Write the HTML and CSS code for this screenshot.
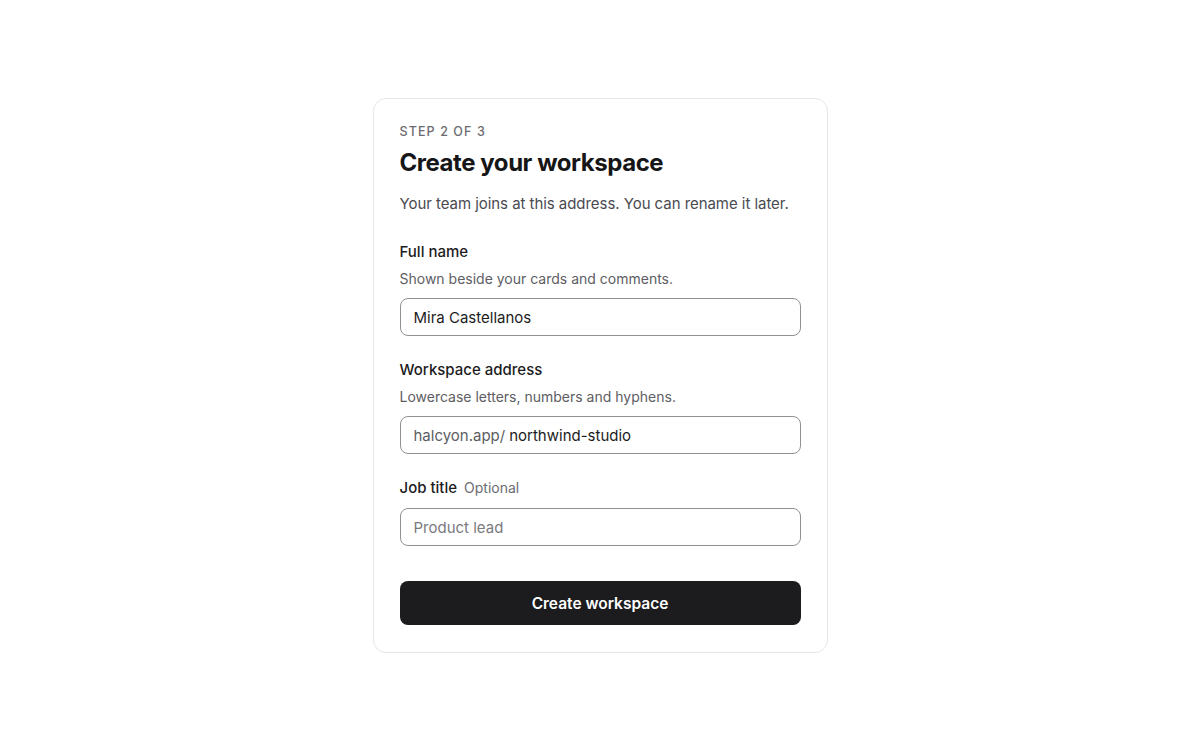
FILE: index.html
```html
<!DOCTYPE html>
<html lang="en">
<head>
<meta charset="utf-8">
<title>Create your workspace</title>
<link rel="stylesheet" href="styles.css">
</head>
<body>
<main class="page">
  <form class="card">
    <p class="step">STEP 2 OF 3</p>
    <h1 class="title">Create your workspace</h1>
    <p class="lede">Your team joins at this address. You can rename it later.</p>

    <div class="field">
      <label class="label" for="fullname">Full name</label>
      <p class="help">Shown beside your cards and comments.</p>
      <div class="input"><input id="fullname" type="text" value="Mira Castellanos"></div>
    </div>

    <div class="field">
      <label class="label" for="address">Workspace address</label>
      <p class="help">Lowercase letters, numbers and hyphens.</p>
      <div class="input"><span class="prefix">halcyon.app/</span><input id="address" type="text" value="northwind-studio"></div>
    </div>

    <div class="field field-last">
      <label class="label" for="job">Job title <span class="optional">Optional</span></label>
      <div class="input"><input id="job" type="text" placeholder="Product lead"></div>
    </div>

    <button class="submit" type="button">Create workspace</button>
  </form>
</main>
</body>
</html>
```

FILE: styles.css
```css
* { box-sizing: border-box; }
html, body { margin: 0; padding: 0; background: #ffffff; }
body {
  font-family: Inter, "Noto Sans", sans-serif;
  color: #1a1a1a;
  -webkit-font-smoothing: antialiased;
}
.page {
  display: flex;
  justify-content: center;
  padding-top: 98px;
}
.card {
  width: 455px;
  border: 1px solid #e6e6e8;
  border-radius: 13px;
  padding: 25px 26px 27px;
  display: flex;
  flex-direction: column;
}
.step {
  margin: 0;
  font-size: 12.5px;
  line-height: 16px;
  letter-spacing: 1.1px;
  color: #6b6b70;
  font-weight: 500;
}
.title {
  margin: 7px 0 0;
  font-size: 24px;
  line-height: 32px;
  font-weight: 700;
  letter-spacing: -0.45px;
  color: #161618;
}
.lede {
  margin: 14px 0 0;
  font-size: 15px;
  line-height: 22px;
  letter-spacing: -0.05px;
  color: #4a4a50;
}
.field {
  display: flex;
  flex-direction: column;
  margin-top: 27px;
}
.field + .field { margin-top: 24px; }
.label {
  font-size: 15px;
  line-height: 20px;
  font-weight: 500;
  color: #1c1c1e;
}
.optional {
  font-size: 14px;
  font-weight: 400;
  color: #6b6b70;
  margin-left: 3px;
}
.help {
  margin: 7px 0 0;
  font-size: 14px;
  line-height: 20px;
  color: #5d5d63;
}
.input {
  margin-top: 9px;
  height: 38px;
  border: 1px solid #909096;
  border-radius: 8px;
  display: flex;
  align-items: center;
  padding: 0 13px;
  background: #fff;
}
.field-last .input { margin-top: 10px; }
.prefix {
  font-size: 15px;
  color: #5d5d63;
  margin-right: 4px;
  white-space: nowrap;
}
.input input {
  border: 0;
  outline: 0;
  padding: 0;
  margin: 0;
  flex: 1;
  min-width: 0;
  font: inherit;
  font-size: 15px;
  color: #1c1c1e;
  background: transparent;
}
.input input::placeholder { color: #7a7a80; }
.submit {
  margin-top: 35px;
  height: 44px;
  border: 0;
  border-radius: 8px;
  background: #1c1c1e;
  color: #ffffff;
  font: inherit;
  font-size: 15.5px;
  font-weight: 600;
  cursor: pointer;
}
```
